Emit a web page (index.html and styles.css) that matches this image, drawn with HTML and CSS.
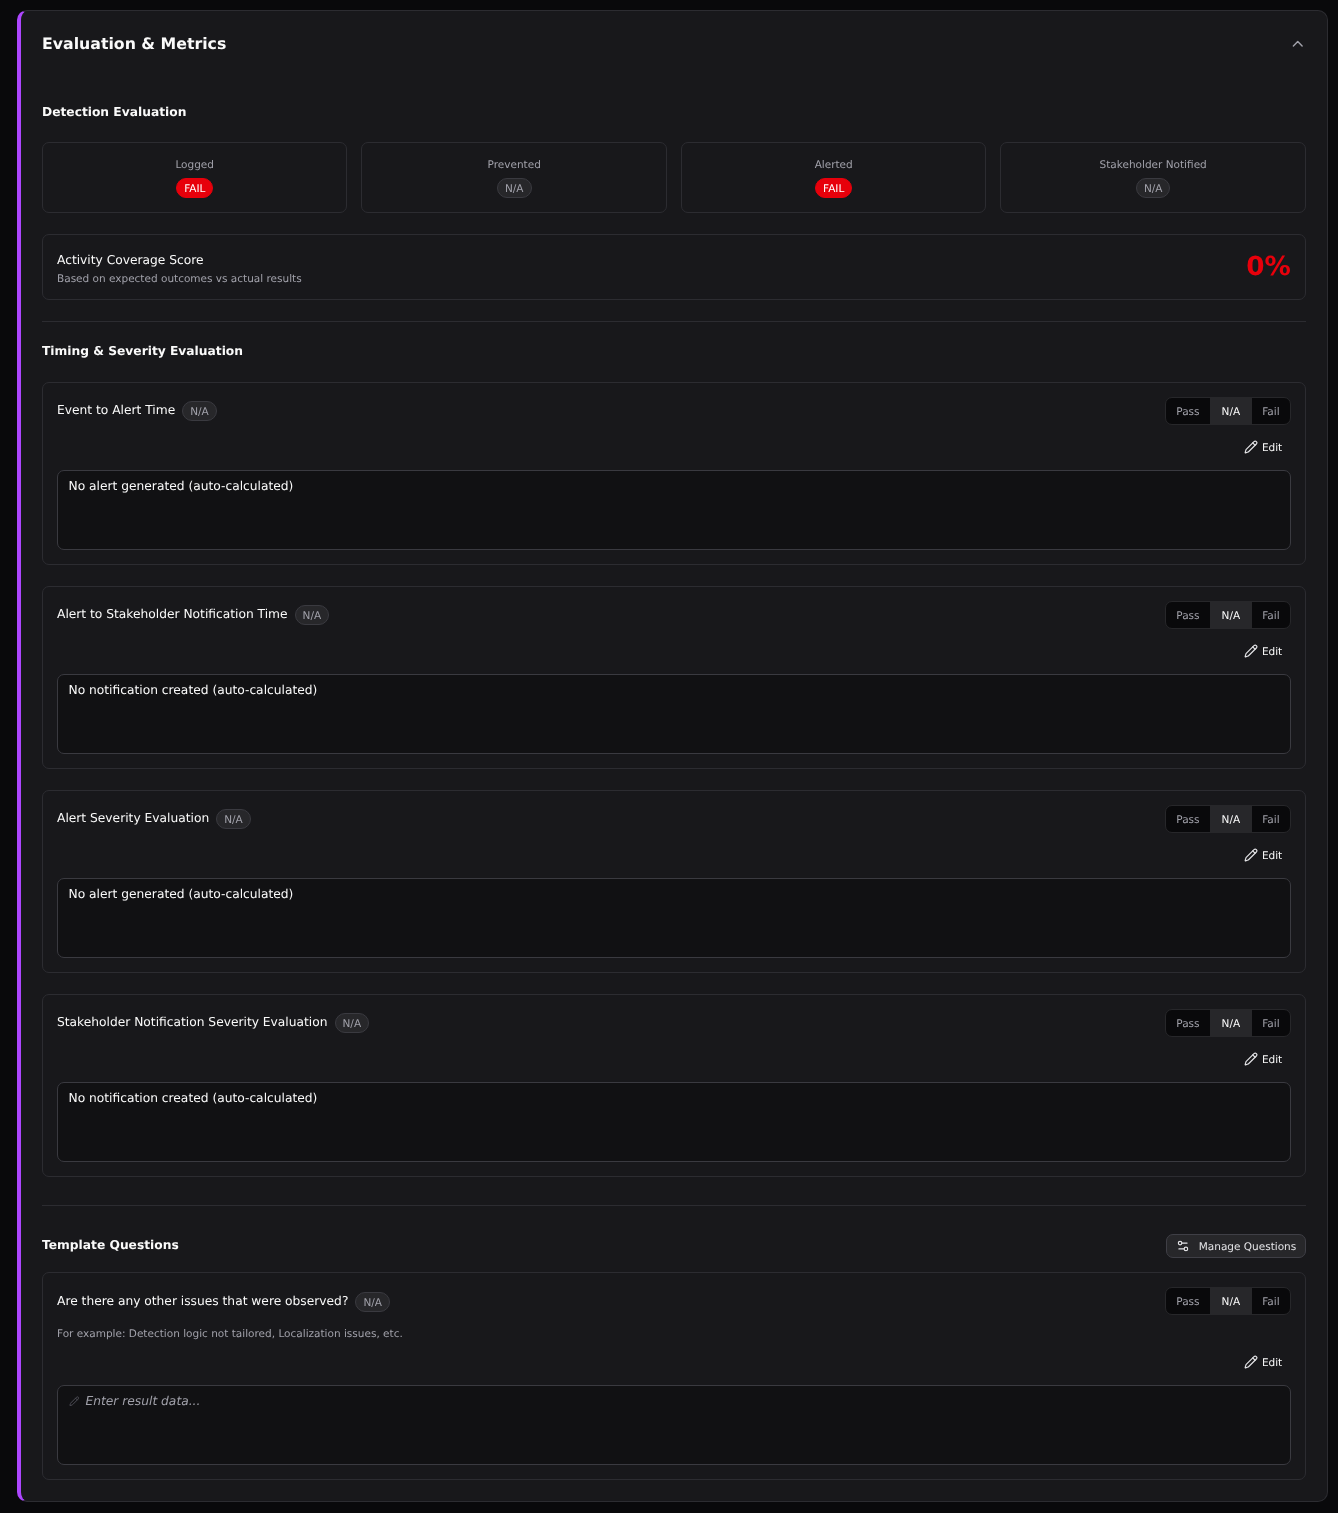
FILE: index.html
```html
<!DOCTYPE html>
<html lang="en">
<head>
<meta charset="utf-8">
<title>Evaluation &amp; Metrics</title>
<link rel="stylesheet" href="styles.css">
</head>
<body>
<svg class="defs" width="0" height="0" aria-hidden="true">
  <symbol id="pencil" viewBox="0 0 24 24"><path d="M21.17 6.81a2.82 2.82 0 0 0-3.99-3.99L3.84 16.17a2 2 0 0 0-.5.83l-1.32 4.35a.5.5 0 0 0 .62.62l4.35-1.32a2 2 0 0 0 .83-.5z"/><path d="m15 5 4 4"/></symbol>
</svg>
<main class="panel">
  <header class="panel-head">
    <h1>Evaluation &amp; Metrics</h1>
    <svg class="chevron" viewBox="0 0 24 24"><path d="m18 15-6-6-6 6"/></svg>
  </header>

  <h2 class="section-title first">Detection Evaluation</h2>
  <div class="stat-grid">
    <div class="stat"><span class="stat-label">Logged</span><span class="pill fail">FAIL</span></div>
    <div class="stat"><span class="stat-label">Prevented</span><span class="pill">N/A</span></div>
    <div class="stat"><span class="stat-label">Alerted</span><span class="pill fail">FAIL</span></div>
    <div class="stat"><span class="stat-label">Stakeholder Notified</span><span class="pill">N/A</span></div>
  </div>
  <div class="score">
    <div class="score-text">
      <div class="score-title">Activity Coverage Score</div>
      <div class="score-sub">Based on expected outcomes vs actual results</div>
    </div>
    <div class="score-value">0%</div>
  </div>
  <hr class="rule rule-a">

  <h2 class="section-title timing">Timing &amp; Severity Evaluation</h2>
  <div class="eval-list">
    <section class="eval">
      <div class="eval-top">
        <div class="eval-name"><span>Event to Alert Time</span><span class="pill">N/A</span></div>
        <div class="toggle"><span>Pass</span><span class="on">N/A</span><span>Fail</span></div>
      </div>
      <div class="edit-row"><span class="edit"><svg class="pencil"><use href="#pencil"/></svg>Edit</span></div>
      <div class="box">No alert generated (auto-calculated)</div>
    </section>
    <section class="eval">
      <div class="eval-top">
        <div class="eval-name"><span>Alert to Stakeholder Notification Time</span><span class="pill">N/A</span></div>
        <div class="toggle"><span>Pass</span><span class="on">N/A</span><span>Fail</span></div>
      </div>
      <div class="edit-row"><span class="edit"><svg class="pencil"><use href="#pencil"/></svg>Edit</span></div>
      <div class="box">No notification created (auto-calculated)</div>
    </section>
    <section class="eval">
      <div class="eval-top">
        <div class="eval-name"><span>Alert Severity Evaluation</span><span class="pill">N/A</span></div>
        <div class="toggle"><span>Pass</span><span class="on">N/A</span><span>Fail</span></div>
      </div>
      <div class="edit-row"><span class="edit"><svg class="pencil"><use href="#pencil"/></svg>Edit</span></div>
      <div class="box">No alert generated (auto-calculated)</div>
    </section>
    <section class="eval">
      <div class="eval-top">
        <div class="eval-name"><span>Stakeholder Notification Severity Evaluation</span><span class="pill">N/A</span></div>
        <div class="toggle"><span>Pass</span><span class="on">N/A</span><span>Fail</span></div>
      </div>
      <div class="edit-row"><span class="edit"><svg class="pencil"><use href="#pencil"/></svg>Edit</span></div>
      <div class="box">No notification created (auto-calculated)</div>
    </section>
  </div>
  <hr class="rule rule-b">

  <div class="template-head">
    <h2 class="section-title template">Template Questions</h2>
    <button class="manage" type="button">
      <svg class="sliders" viewBox="0 0 24 24"><path d="M14 17H5"/><path d="M19 7h-9"/><circle cx="17" cy="17" r="3"/><circle cx="7" cy="7" r="3"/></svg>
      Manage Questions
    </button>
  </div>
  <section class="eval question">
    <div class="eval-top">
      <div class="eval-name"><span>Are there any other issues that were observed?</span><span class="pill">N/A</span></div>
      <div class="toggle"><span>Pass</span><span class="on">N/A</span><span>Fail</span></div>
    </div>
    <p class="hint">For example: Detection logic not tailored, Localization issues, etc.</p>
    <div class="edit-row"><span class="edit"><svg class="pencil"><use href="#pencil"/></svg>Edit</span></div>
    <div class="box placeholder"><svg class="pencil small"><use href="#pencil"/></svg><em>Enter result data...</em></div>
  </section>
</main>
</body>
</html>
```

FILE: styles.css
```css
* { box-sizing: border-box; }
html, body { margin: 0; }
body {
  background: #09090b;
  color: #fafafa;
  font-family: "DejaVu Sans", sans-serif;
  text-rendering: geometricPrecision;
  padding: 10px 10.3px 11px 16.8px;
  height: 1513px;
}
.defs { position: absolute; }
.panel {
  background: #18181b;
  border: 1px solid #2c2c31;
  border-left: 4px solid #ad46ff;
  border-radius: 10px;
  padding: 0 21px 21px 21px;
  height: 1492px;
  will-change: transform;
}
.panel-head {
  display: flex;
  justify-content: space-between;
  align-items: center;
  height: 65px;
}
h1 { margin: 0; font-size: 15.75px; font-weight: 700; line-height: 22px; }
.chevron {
  width: 17.5px; height: 17.5px; fill: none; stroke: #a1a1aa;
  stroke-width: 2; stroke-linecap: round; stroke-linejoin: round;
  margin-right: -1px;
}
.section-title {
  margin: 0;
  font-size: 12.25px;
  font-weight: 700;
  line-height: 18px;
}
.section-title.first { margin: 27px 0 21px; }
.section-title.timing { margin-bottom: 22px; }
.section-title.template { margin-top: -2px; }
.stat-grid {
  display: grid;
  grid-template-columns: repeat(4, 1fr);
  gap: 14px;
}
.stat {
  height: 71px;
  border: 1px solid #2c2c31;
  border-radius: 7px;
  display: flex;
  flex-direction: column;
  align-items: center;
  padding-top: 15px;
  gap: 6px;
}
.stat-label { font-size: 10.5px; line-height: 14px; color: #a1a1aa; }
.pill {
  display: inline-flex;
  align-items: center;
  height: 20px;
  padding: 2px 7px 0;
  border: 1px solid #3a3a40;
  background: #27272a;
  border-radius: 999px;
  font-size: 10.5px;
  color: #a1a1aa;
}
.pill.fail { background: #e7000b; border-color: #e7000b; color: #fff; }
.score {
  margin-top: 21px;
  height: 66px;
  border: 1px solid #2c2c31;
  border-radius: 7px;
  padding: 0 14px;
  display: flex;
  align-items: center;
  justify-content: space-between;
}
.score-text { padding-top: 3px; }
.score-title { font-size: 12.25px; line-height: 18px; }
.score-sub { font-size: 10.5px; line-height: 14px; color: #a1a1aa; margin-top: 3px; }
.score-value { font-size: 26.25px; font-weight: 700; color: #e7000b; line-height: 32px; margin-top: -1px; }
.rule { border: 0; border-top: 1px solid #2c2c31; margin: 0; }
.rule-a { margin: 21px 0 20px; }
.rule-b { margin: 28px 0 0; }
.eval-list { display: flex; flex-direction: column; gap: 21px; }
.eval {
  height: 183px;
  border: 1px solid #2c2c31;
  border-radius: 7px;
  padding: 14px;
}
.eval.question { height: 208px; margin-top: 14px; }
.eval-top { display: flex; justify-content: space-between; align-items: flex-start; }
.eval-name {
  display: flex; align-items: flex-start; gap: 7px;
  font-size: 12.25px; line-height: 18px; padding-top: 4px;
}
.question .eval-name { padding-top: 5px; }
.toggle {
  display: grid;
  grid-template-columns: 44px 42px 38px;
  height: 28px;
  background: #09090b;
  border: 1px solid #27272a;
  border-radius: 7px;
  overflow: hidden;
  font-size: 10.5px;
  color: #a1a1aa;
}
.toggle span { display: flex; align-items: center; justify-content: center; padding-top: 2px; }
.toggle .on { background: #27272a; color: #fafafa; }
.edit-row { display: flex; justify-content: flex-end; margin-top: 10px; height: 24px; }
.question .edit-row { margin-top: 9px; }
.edit {
  display: inline-flex; align-items: center; gap: 4px;
  font-size: 10.5px; padding: 2px 8.7px 0 0; color: #fafafa;
}
.pencil {
  width: 14px; height: 14px; fill: none; stroke: #e4e4e7;
  stroke-width: 2; stroke-linecap: round; stroke-linejoin: round;
  margin-bottom: 2px;
}
.pencil.small { width: 10.5px; height: 10.5px; stroke: #52525b; margin: 3px 0 0; }
.box {
  margin-top: 11px;
  height: 80px;
  border: 1px solid #3a3a40;
  border-radius: 7px;
  background: #111113;
  padding: 8px 10.5px;
  font-size: 12.25px;
  line-height: 14px;
}
.placeholder { display: flex; align-items: flex-start; gap: 6.5px; color: #a1a1aa; padding-top: 7px; }
.placeholder em { font-style: italic; line-height: 16px; }
.hint { margin: 12px 0 0; font-size: 10.5px; line-height: 14px; color: #a1a1aa; }
.template-head {
  display: flex; justify-content: space-between; align-items: center;
  margin-top: 28px;
  height: 24px;
}
.manage {
  display: inline-flex; align-items: center; gap: 9px;
  height: 24px; padding: 2px 8.7px 0;
  font: 10.5px "DejaVu Sans", sans-serif;
  text-rendering: geometricPrecision;
  color: #e4e4e7;
  background: #27272a;
  border: 1px solid #3f3f46;
  border-radius: 7px;
}
.sliders {
  width: 14px; height: 14px; fill: none; stroke: #e4e4e7;
  stroke-width: 2; stroke-linecap: round; stroke-linejoin: round;
  margin-bottom: 2px;
}
```
